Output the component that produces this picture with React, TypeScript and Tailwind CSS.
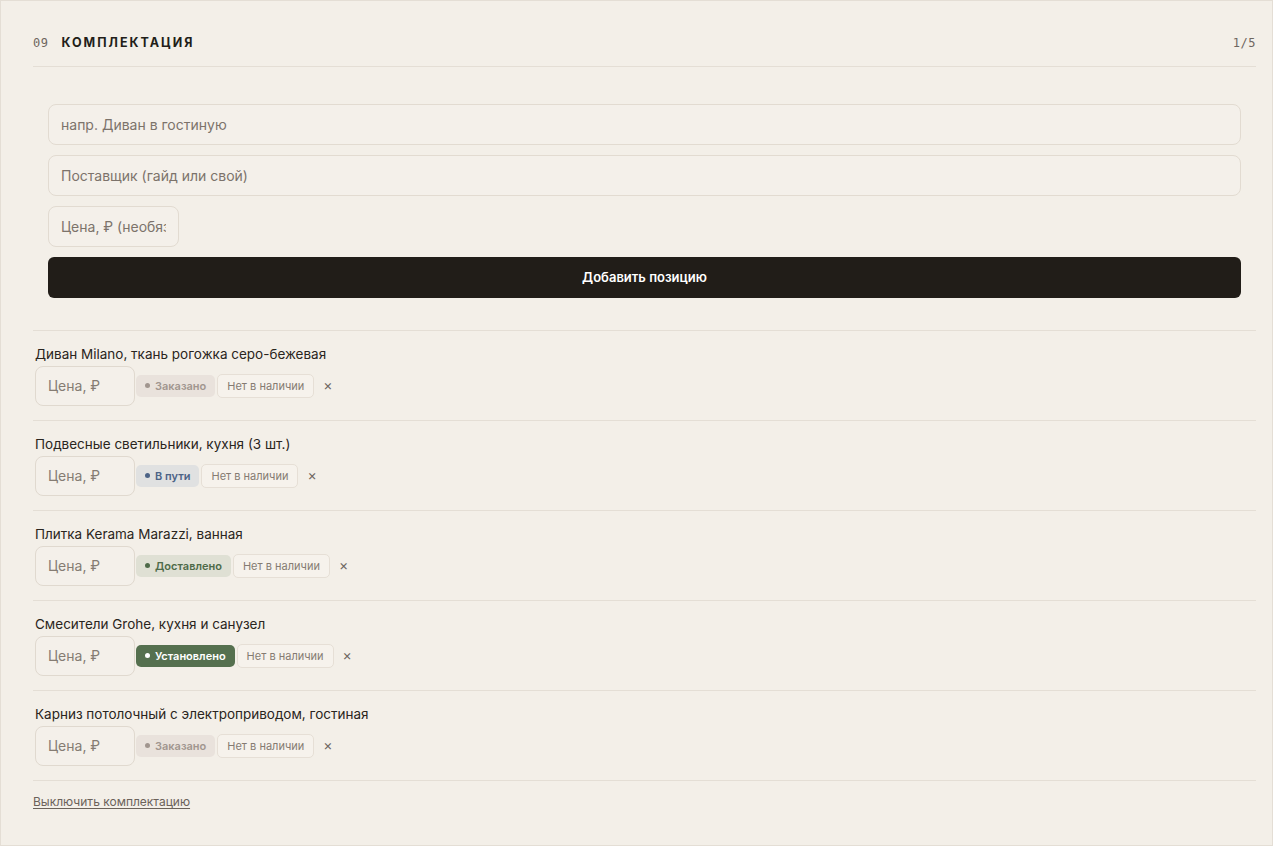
import React, { useState } from 'react';

type Status = 'ordered' | 'transit' | 'delivered' | 'installed';

interface Item {
  id: number;
  name: string;
  status: Status;
}

const statusStyles: Record<Status, { label: string; pill: string; dot: string }> = {
  ordered: { label: 'Заказано', pill: 'bg-[#e9e2dc] text-[#a1968f]', dot: 'bg-[#a1968f]' },
  transit: { label: 'В пути', pill: 'bg-[#e0e1e1] text-[#4c6386]', dot: 'bg-[#4c6386]' },
  delivered: { label: 'Доставлено', pill: 'bg-[#dfe0d4] text-[#4e6a49]', dot: 'bg-[#4e6a49]' },
  installed: { label: 'Установлено', pill: 'bg-[#55704f] text-white', dot: 'bg-white' },
};

const initialItems: Item[] = [
  { id: 1, name: 'Диван Milano, ткань рогожка серо-бежевая', status: 'ordered' },
  { id: 2, name: 'Подвесные светильники, кухня (3 шт.)', status: 'transit' },
  { id: 3, name: 'Плитка Kerama Marazzi, ванная', status: 'delivered' },
  { id: 4, name: 'Смесители Grohe, кухня и санузел', status: 'installed' },
  { id: 5, name: 'Карниз потолочный с электроприводом, гостиная', status: 'ordered' },
];

const font = { fontFamily: 'Inter, "Noto Sans", sans-serif' };
const mono = { fontFamily: '"DejaVu Sans Mono", "Liberation Mono", monospace' };

export default function App() {
  const [items, setItems] = useState<Item[]>(initialItems);

  const removeItem = (id: number) => setItems(prev => prev.filter(i => i.id !== id));

  return (
    <div className="min-h-screen bg-[#f3efe8]" style={font}>
      <section className="border border-[#e4ded5] bg-[#f3efe8] pl-8 pr-[16px] pb-[33px]">
        <header className="flex items-center justify-between pt-[33px] pb-[13px] border-b border-[#e4ded5]">
          <div className="flex items-center gap-[13px]">
            <span className="text-[12px] text-[#6e665f] tracking-[0.5px]" style={mono}>09</span>
            <h2 className="text-[12.5px] font-bold tracking-[2px] text-[#221e19]">КОМПЛЕКТАЦИЯ</h2>
          </div>
          <span className="text-[12px] text-[#6e665f] tracking-[0.5px]" style={mono}>1/5</span>
        </header>

        <form
          className="flex flex-col gap-[10px] px-[15px] pt-[37px] pb-[32px] border-b border-[#e4ded5]"
          onSubmit={e => e.preventDefault()}
        >
          <input
            className="h-[41px] w-full rounded-lg border border-[#e2dbd1] bg-[#f4f0ea] px-3 text-[14px] text-[#221e19] placeholder:text-[#7c736b] outline-none"
            placeholder="напр. Диван в гостиную"
          />
          <input
            className="h-[41px] w-full rounded-lg border border-[#e2dbd1] bg-[#f4f0ea] px-3 text-[14px] text-[#221e19] placeholder:text-[#7c736b] outline-none"
            placeholder="Поставщик (гайд или свой)"
          />
          <input
            className="h-[41px] w-[131px] rounded-lg border border-[#e2dbd1] bg-[#f4f0ea] px-3 text-[14px] text-[#221e19] placeholder:text-[#7c736b] outline-none"
            placeholder="Цена, ₽ (необязательно)"
          />
          <button
            type="submit"
            className="h-[41px] w-full rounded-md bg-[#211d18] text-[13px] font-semibold text-white"
          >
            Добавить позицию
          </button>
        </form>

        <ul>
          {items.map(item => {
            const s = statusStyles[item.status];
            return (
              <li key={item.id} className="border-b border-[#e4ded5] px-[2px] pt-[13px] pb-[14px]">
                <div className="mb-[2px] text-[13.5px] leading-[20px] text-[#2a2520]">{item.name}</div>
                <div className="flex items-center">
                  <input
                    className="h-[40px] w-[100px] rounded-lg border border-[#e0d9cf] bg-[#f4f0ea] px-3 text-[14px] placeholder:text-[#857c73] outline-none"
                    placeholder="Цена, ₽"
                  />
                  <span
                    className={`ml-px flex h-[22px] items-center gap-[5px] rounded-[5px] pl-[9px] pr-[9px] text-[11px] font-semibold ${s.pill}`}
                  >
                    <span className={`h-[5px] w-[5px] rounded-full ${s.dot}`} />
                    {s.label}
                  </span>
                  <span className="ml-[2px] flex h-[24px] items-center rounded-[5px] border border-[#e6dfd6] bg-[#f6f2ec] px-[9px] text-[11px] text-[#857b72]">
                    Нет в наличии
                  </span>
                  <button
                    className="ml-[6px] mb-[2px] px-[3px] text-[14px] leading-none text-[#6e665f]"
                    onClick={() => removeItem(item.id)}
                  >
                    ×
                  </button>
                </div>
              </li>
            );
          })}
        </ul>

        <div className="pt-[7px]">
          <a href="#" className="text-[12px] text-[#6b625a] underline underline-offset-2">
            Выключить комплектацию
          </a>
        </div>
      </section>
    </div>
  );
}
